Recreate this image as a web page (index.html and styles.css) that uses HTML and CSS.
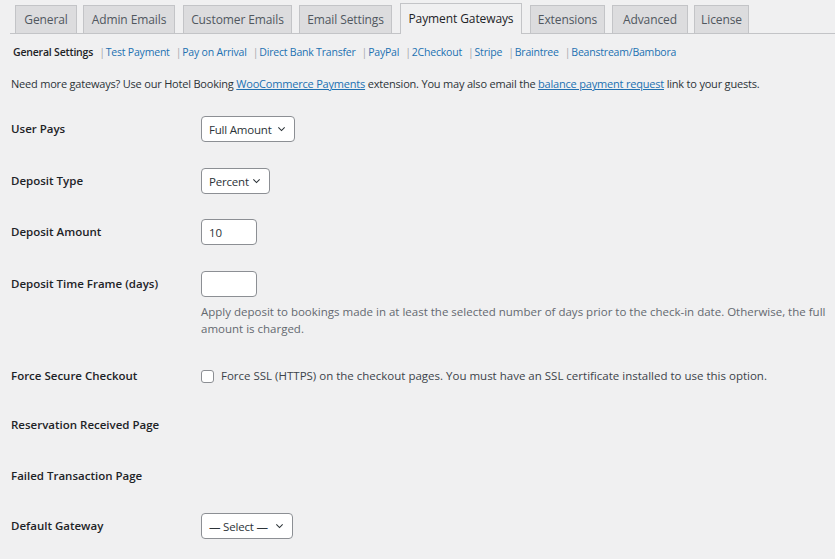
FILE: index.html
```html
<!DOCTYPE html>
<html>
<head>
<meta charset="utf-8">
<link rel="stylesheet" href="styles.css">
</head>
<body>
<div class="wrap">
  <nav class="tabs">
    <span class="tab t1">General</span>
    <span class="tab t2">Admin Emails</span>
    <span class="tab t3">Customer Emails</span>
    <span class="tab t4">Email Settings</span>
    <span class="tab t5 active">Payment Gateways</span>
    <span class="tab t6">Extensions</span>
    <span class="tab t7">Advanced</span>
    <span class="tab t8">License</span>
  </nav>
  <ul class="subnav">
    <li class="current">General Settings</li>
    <li><span class="sep">|</span><a>Test Payment</a></li>
    <li><span class="sep">|</span><a>Pay on Arrival</a></li>
    <li><span class="sep">|</span><a>Direct Bank Transfer</a></li>
    <li><span class="sep">|</span><a>PayPal</a></li>
    <li><span class="sep">|</span><a>2Checkout</a></li>
    <li><span class="sep">|</span><a>Stripe</a></li>
    <li><span class="sep">|</span><a>Braintree</a></li>
    <li><span class="sep">|</span><a>Beanstream/Bambora</a></li>
  </ul>
  <p class="note">Need more gateways? Use our Hotel Booking <a class="ul">WooCommerce Payments</a> extension. You may also email the <a class="ul">balance payment request</a> link to your guests.</p>

  <div class="form">
    <div class="row h52">
      <div class="label">User Pays</div>
      <div class="field"><span class="select w94">Full Amount<svg class="chev" viewBox="0 0 10 6"><path d="M1.5 1.2l3.5 3.5 3.5-3.5"/></svg></span></div>
    </div>
    <div class="row">
      <div class="label">Deposit Type</div>
      <div class="field"><span class="select w69">Percent<svg class="chev" viewBox="0 0 10 6"><path d="M1.5 1.2l3.5 3.5 3.5-3.5"/></svg></span></div>
    </div>
    <div class="row h52">
      <div class="label">Deposit Amount</div>
      <div class="field"><span class="input">10</span></div>
    </div>
    <div class="row tall">
      <div class="label">Deposit Time Frame (days)</div>
      <div class="field"><span class="input"></span>
        <p class="desc">Apply deposit to bookings made in at least the selected number of days prior to the check-in date. Otherwise, the full amount is charged.</p>
      </div>
    </div>
    <div class="row h49">
      <div class="label">Force Secure Checkout</div>
      <div class="field check"><span class="box"></span>Force SSL (HTTPS) on the checkout pages. You must have an SSL certificate installed to use this option.</div>
    </div>
    <div class="row">
      <div class="label">Reservation Received Page</div>
      <div class="field"></div>
    </div>
    <div class="row h50">
      <div class="label">Failed Transaction Page</div>
      <div class="field"></div>
    </div>
    <div class="row">
      <div class="label">Default Gateway</div>
      <div class="field"><span class="select w92">— Select —<svg class="chev" viewBox="0 0 10 6"><path d="M1.5 1.2l3.5 3.5 3.5-3.5"/></svg></span></div>
    </div>
  </div>
</div>
</body>
</html>
```
FILE: styles.css
```css
html, body {
  margin: 0;
  padding: 0;
  background: #f0f0f1;
}
body {
  font-family: "Open Sans", "Noto Sans", sans-serif;
  font-size: 11.5px;
  color: #3c434a;
  width: 835px;
  height: 559px;
  overflow: hidden;
}
.wrap {
  padding-left: 10px;
}
.tabs {
  display: flex;
  align-items: flex-end;
  padding: 0 0 0 5px;
  border-bottom: 1px solid #c3c4c7;
  height: 34px;
  box-sizing: border-box;
}
.tab {
  display: flex;
  align-items: center;
  justify-content: center;
  white-space: nowrap;
  height: 28px;
  box-sizing: border-box;
  padding-bottom: 1px;
  border: 1px solid #c3c4c7;
  border-bottom: none;
  background: #dcdcde;
  color: #50575e;
  font-size: 12px;
  font-weight: 500;
  letter-spacing: -0.1px;
}
.tab.active {
  background: #f0f0f1;
  color: #1d2327;
  height: 31px;
  margin-bottom: -1px;
  padding-bottom: 2px;
}
.t1 { width: 62px; margin-right: 6px; }
.t2 { width: 92px; margin-right: 8px; }
.t3 { width: 109px; margin-right: 7px; }
.t4 { width: 93px; margin-right: 8px; }
.t5 { width: 122px; margin-right: 8px; }
.t6 { width: 75px; margin-right: 7px; }
.t7 { width: 76px; margin-right: 6px; }
.t8 { width: 55px; }
.subnav {
  list-style: none;
  margin: 0;
  padding: 9px 0 0 3px;
  display: flex;
  height: 17px;
  align-items: center;
  font-size: 10.5px;
  letter-spacing: -0.2px;
}
.subnav li { white-space: nowrap; }
.subnav .current { color: #1d2327; font-weight: 600; }
.subnav .sep { color: #a7aaad; margin: 0 1px 0 6px; }
.subnav li a { color: #2271b1; }
.note {
  margin: 16px 0 0 1px;
  font-size: 11px;
  letter-spacing: -0.2px;
  color: #2c3338;
  line-height: 16px;
}
a.ul { color: #2271b1; text-decoration: underline; }
.form {
  margin-top: 16px;
  padding-left: 1px;
}
.row {
  display: flex;
  height: 51px;
}
.row.h52 { height: 52px; }
.row.h50 { height: 50px; }
.row.h49 { height: 49px; }
.label {
  width: 190px;
  flex: none;
  font-weight: 600;
  color: #1d2327;
  font-size: 11.5px;
  padding-top: 13px;
  line-height: 16px;
}
.field {
  flex: 1;
  padding-top: 8px;
}
.select, .input {
  display: inline-flex;
  align-items: center;
  height: 26px;
  box-sizing: border-box;
  border: 1px solid #8c8f94;
  border-radius: 4px;
  background: #fff;
  color: #2c3338;
  font-size: 11.5px;
  letter-spacing: -0.2px;
  padding-left: 7px;
}
.select { justify-content: space-between; padding-right: 8px; }
.w94 { width: 94px; }
.w69 { width: 69px; }
.w92 { width: 92px; }
.input { width: 56px; }
.chev {
  width: 9px;
  height: 6px;
  fill: none;
  stroke: #2c3338;
  stroke-width: 1.2;
}
.row.tall { height: 92px; }
.desc {
  margin: 3px 0 0 0;
  color: #646970;
  line-height: 17px;
  font-size: 11.5px;
}
.check {
  display: flex;
  align-items: flex-start;
  padding-top: 13px;
  line-height: 16px;
  color: #3c434a;
}
.box {
  width: 13px;
  height: 13px;
  margin-top: 2px;
  box-sizing: border-box;
  border: 1px solid #8c8f94;
  border-radius: 3px;
  background: #fff;
  margin-right: 7px;
  flex: none;
}
```
